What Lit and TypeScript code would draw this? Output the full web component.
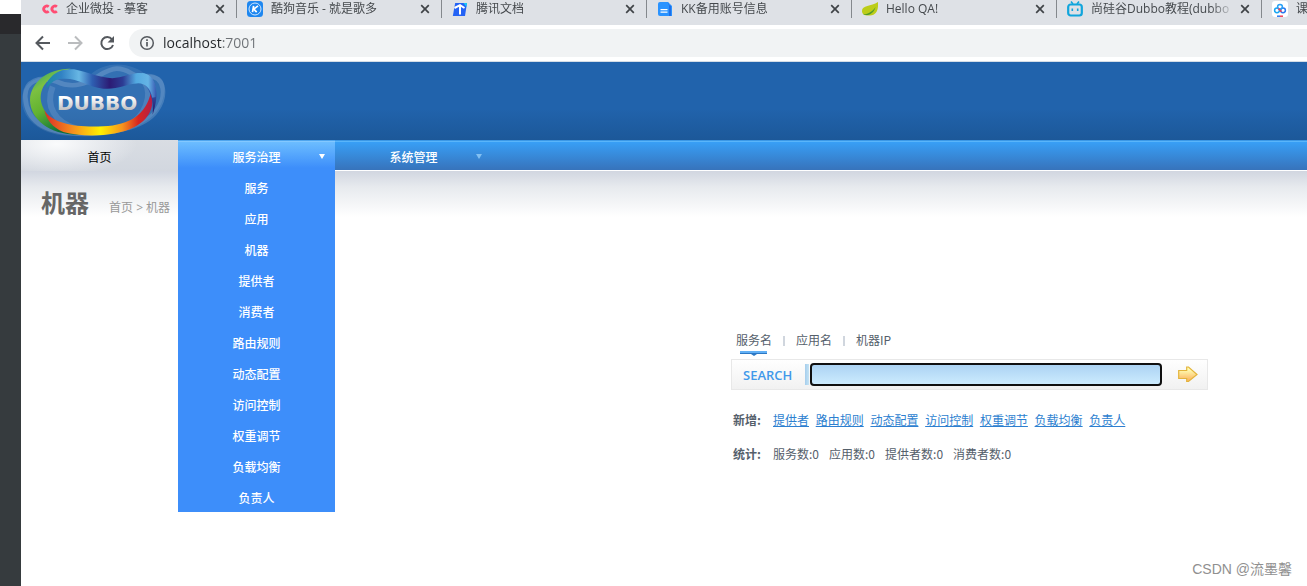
import { LitElement, html, svg, css } from "lit";
import { customElement, state } from "lit/decorators.js";

const tabs = [
  { title: "企业微投 - 摹客", icon: "cc" },
  { title: "酷狗音乐 - 就是歌多", icon: "kugou" },
  { title: "腾讯文档", icon: "tencent" },
  { title: "KK备用账号信息", icon: "doc" },
  { title: "Hello QA!", icon: "leaf" },
  { title: "尚硅谷Dubbo教程(dubbo", icon: "bili" },
  { title: "课", icon: "cloud" },
];

const icons: Record<string, unknown> = {
  cc: svg`<g fill="none" stroke="#ff4d73" stroke-width="2.8">
    <path d="M6.7 5.700A3 3 0 1 0 6.700 10.300"/><path d="M14.900 5.700A3 3 0 1 0 14.900 10.300"/></g>`,
  kugou: svg`<rect width="16" height="16" rx="3.5" fill="#1e87f0"/>
    <circle cx="8" cy="8" r="6" fill="none" stroke="#cfe7ff" stroke-width="1"/>
    <path d="M6.6 4.8 5.5 11.2M11 4.8 6.8 8.2 9.7 11.2" fill="none" stroke="#fff" stroke-width="1.7"/>`,
  tencent: svg`<path d="M3.2 2H15L13 15H.8z" fill="#2463f5"/><path d="M11.5 2H15l-.6 4z" fill="#19c8f5"/>
    <path d="M2.500 7 8 4.200 12.500 7M8 4.500V13.500" fill="none" stroke="#fff" stroke-width="2"/>`,
  doc: svg`<path d="M3 1h8l4 4v10H3a2 2 0 0 1-2-2V3a2 2 0 0 1 2-2z" fill="#2a93ff"/>
    <path d="M11 1v2.500L14 5v10h-2V5z" fill="#1d6fe8"/>
    <path d="M3.500 8.600h7M3.500 11.200h7" stroke="#fff" stroke-width="1.300"/>`,
  leaf: svg`<path d="M16 1c.5 7-1 13-8 13.500C3 15 0 13.500 0 10 0 4 9 5.500 16 1z" fill="#bccd18"/>
    <path d="M1 13.500C7 13 11 10 13.500 6 12 12 7 15.500 1 13.500z" fill="#4f9a2c"/>`,
  bili: svg`<rect x="1.200" y="3.500" width="13.600" height="11" rx="2.500" fill="none" stroke="#10a5dc" stroke-width="2.200"/>
    <path d="M4 .5 6 3M12 .5 10 3" stroke="#10a5dc" stroke-width="1.600"/>
    <path d="M5.300 7.500v2.500M10.700 7.500v2.500" stroke="#10a5dc" stroke-width="1.600"/>`,
  cloud: svg`<rect width="16" height="16" rx="3" fill="#fff"/>
    <g fill="none" stroke-width="1.500"><circle cx="5" cy="9.300" r="2.400" stroke="#18a5f2"/>
    <circle cx="11" cy="9.300" r="2.400" stroke="#2878f0"/><circle cx="8" cy="5.800" r="2.400" stroke="#28a0f5"/>
    <path d="M6.500 7.500 9.500 10.800" stroke="#ef4056"/></g>
    <path d="M5 15.200h3" stroke="#2878f0" stroke-width="1.500"/><path d="M8 15.200h3" stroke="#ef4056" stroke-width="1.500"/>`,
};

@customElement("browser-bar")
class BrowserBar extends LitElement {
  static styles = css`
    :host { display: block; font-family: "Open Sans", "Noto Sans CJK SC", sans-serif; }
    button { border: 0; padding: 0; background: none; font: inherit; color: inherit; display: block; }
    .tabs { display: flex; height: 25px; padding-left: 11px; background: #dee1e6; overflow: hidden; }
    .tab {
      box-sizing: border-box; flex: 0 0 205px; height: 18px; display: flex; align-items: center;
      padding: 0 11px 0 10px; border-right: 1px solid #84888d; font-size: 12px; line-height: 16px; color: #45494d;
    }
    .icon { flex: none; width: 16px; height: 16px; }
    .title {
      flex: 1; margin: 0 5px 0 8px; overflow: hidden; white-space: nowrap; text-align: left;
      -webkit-mask-image: linear-gradient(to left, transparent, #000 24px);
    }
    .close svg { display: block; width: 10px; height: 10px; }
    .tools { display: flex; align-items: center; height: 36px; background: #fff; border-bottom: 1px solid #d5dde6; padding-left: 12px; }
    .nav { width: 20px; height: 20px; margin-right: 12px; }
    .nav svg { display: block; }
    .address {
      flex: 1; display: flex; align-items: center; gap: 6px; height: 28px;
      padding-left: 8px; background: #f1f3f4; border-radius: 14px 0 0 14px;
    }
    .url {
      flex: 1; min-width: 0; border: 0; padding: 0; outline: 0; height: 22px;
      font: 14px/22px "Open Sans", "Noto Sans CJK SC", sans-serif; color: transparent;
      background: linear-gradient(to right, #24272a 59px, #6e7276 59px);
      -webkit-background-clip: text; background-clip: text;
    }
  `;
  render() {
    return html`
      <div class="tabs">
        ${tabs.map(
          (t) => html`<div class="tab">
            <svg class="icon" viewBox="0 0 16 16">${icons[t.icon]}</svg>
            <button class="title">${t.title}</button>
            <button class="close" aria-label="关闭">
              <svg viewBox="0 0 10 10"><path d="M1.200 1.200 8.800 8.800M8.800 1.200 1.200 8.800" stroke="#3f4347" stroke-width="1.700" /></svg>
            </button>
          </div>`
        )}
      </div>
      <div class="tools">
        <button class="nav" aria-label="后退">
          <svg width="20" height="20" fill="none" stroke="#55595e" stroke-width="2"><path d="M17 10H4M10 3.500 3.500 10l6.500 6.500" /></svg>
        </button>
        <button class="nav" aria-label="前进">
          <svg width="20" height="20" fill="none" stroke="#babcbe" stroke-width="2"><path d="M3 10h13M10 3.500l6.500 6.500-6.500 6.500" /></svg>
        </button>
        <button class="nav" aria-label="刷新">
          <svg width="20" height="20"><path d="M15 6.300A6 6 0 1 0 16 12" fill="none" stroke="#55595e" stroke-width="2" /><path d="M17 3v6.500h-6.500z" fill="#55595e" /></svg>
        </button>
        <div class="address">
          <svg width="20" height="20"><circle cx="10" cy="10" r="6.300" fill="none" stroke="#55595e" stroke-width="1.500" /><path d="M10 9v4.500M10 6.300v1.700" stroke="#55595e" stroke-width="1.700" /></svg>
          <input class="url" aria-label="地址" value="localhost:7001" />
        </div>
      </div>
    `;
  }
}

@customElement("dubbo-logo")
class DubboLogo extends LitElement {
  static styles = css`
    :host { display: block; }
    .logo { display: block; }
    .word { font: 700 60px "DejaVu Sans", sans-serif; }
  `;
  render() {
    return html`<svg class="logo" width="146" height="75" viewBox="63 24 438 225" role="img" aria-label="DUBBO">
      <defs>
        <linearGradient id="green" x1="0" y1="0" x2=".5" y2="1">
          <stop offset="0" stop-color="#1d9a7a" /><stop offset=".3" stop-color="#7cc142" />
          <stop offset=".6" stop-color="#62b22f" /><stop offset="1" stop-color="#08703c" />
        </linearGradient>
        <linearGradient id="fire">
          <stop offset="0" stop-color="#d92b27" /><stop offset=".25" stop-color="#f68a1f" />
          <stop offset=".52" stop-color="#fff100" /><stop offset=".72" stop-color="#f7941d" />
          <stop offset=".87" stop-color="#d9261f" /><stop offset="1" stop-color="#b01f4a" />
        </linearGradient>
        <linearGradient id="sky">
          <stop offset="0" stop-color="#1c8ba0" /><stop offset=".14" stop-color="#3182c4" />
          <stop offset=".3" stop-color="#68b7e4" /><stop offset=".42" stop-color="#2e5fb2" />
          <stop offset=".58" stop-color="#2c1b74" /><stop offset=".7" stop-color="#2c3c94" />
          <stop offset=".82" stop-color="#53a9e0" /><stop offset=".93" stop-color="#65b4e5" />
          <stop offset="1" stop-color="#3b5eb5" />
        </linearGradient>
        <linearGradient id="violet" x1="0" y1="0" x2="0" y2="1">
          <stop offset="0" stop-color="#64b4e5" /><stop offset=".45" stop-color="#3159ad" />
          <stop offset="1" stop-color="#261262" />
        </linearGradient>
        <linearGradient id="silver" x1="0" y1="0" x2="0" y2="1">
          <stop offset=".25" stop-color="#fff" /><stop offset=".8" stop-color="#bdbdbf" />
        </linearGradient>
      </defs>
      <g fill="none" stroke="#d5e7f5">
        <path d="M150 64C90 60 66 95 66 135C68 195 130 240 215 240C340 248 455 215 485 140C506 82 488 50 440 58C400 20 320 10 270 57C230 35 180 48 150 64Z" stroke="none" fill="#d5e7f5" fill-opacity=".1" />
        <path d="M76 125C72 75 120 57 170 77C255 116 300 38 350 38C395 38 395 69 440 60C500 58 498 125 470 163C435 215 330 236 230 232C130 230 80 192 76 125Z" stroke-width="14" stroke-opacity=".2" />
        <path d="M158 92C135 150 165 200 230 218M432 75C460 115 438 185 375 214" stroke-width="18" stroke-opacity=".15" />
      </g>
      <path d="M212 38C146 36 91 78 90 132C90 190 150 238 238 236C190 222 154 202 137 168C112 132 120 92 152 67C172 52 195 47 212 38Z" fill="url(#green)" />
      <path d="M133 163C158 204 230 215 310 211C390 207 438 176 453 108C466 150 449 190 402 214C345 243 248 244 190 228C158 216 139 190 133 163Z" fill="url(#fire)" />
      <path d="M425 51C469 57 481 112 458 176C462 130 450 94 420 76Z" fill="url(#violet)" />
      <path d="M145 73C165 45 190 38 222 40C272 50 316 74 358 64C392 56 410 47 437 53C461 62 470 84 467 123L457 125C451 96 435 82 415 82C380 84 350 102 310 98C262 92 235 66 190 68C165 69 155 78 138 97Z" fill="url(#sky)" />
      <text class="word" x="171" y="163" fill="url(#silver)">DUBBO</text>
    </svg>`;
  }
}

@customElement("app-root")
class AppRoot extends LitElement {
  @state() private scope = 0;

  private services = ["服务", "应用", "机器", "提供者", "消费者", "路由规则", "动态配置", "访问控制", "权重调节", "负载均衡", "负责人"];
  private scopes = ["服务名", "应用名", "机器IP"];
  private additions = ["提供者", "路由规则", "动态配置", "访问控制", "权重调节", "负载均衡", "负责人"];
  private totals = ["服务数", "应用数", "提供者数", "消费者数"];

  static styles = css`
    :host {
      display: flex; min-height: 100vh; position: relative; background: #fff; overflow: hidden;
      font: 12px/18px "Noto Sans CJK SC", sans-serif; color: #55606b;
    }
    button { border: 0; padding: 0; background: none; font: inherit; color: inherit; }
    a { color: inherit; text-decoration: none; }
    .rail { flex: none; width: 21px; background: linear-gradient(#fff 14px, #29292c 14px, #29292c 34px, #363b3e 34px); }
    .window { flex: 1; min-width: 0; }
    .banner { height: 78px; background: linear-gradient(#2163ac 60%, #1c5899); box-sizing: border-box; padding-top: 2px; }
    .menu {
      display: flex; height: 31px; box-sizing: border-box; border-bottom: 1px solid #fff;
      background: linear-gradient(#3b98e6 1px, #59b5fa 1px, #59b5fa 2px, #389ff6 2px, #3773bb);
    }
    .entry { position: relative; width: 157px; height: 31px; line-height: 34px; text-align: center; color: #fff; font-weight: 500; }
    .entry > a { display: block; height: 31px; }
    .home { color: #000; font-weight: 400; background: radial-gradient(ellipse 80px 32px at 36px 4px, #fafbfc, transparent), linear-gradient(#d9dde3, #d2d7df); }
    .open { background: linear-gradient(#4fa5ee 1px, #83c8ff 1px, #83c8ff 2px, #6cbdff 2px, #3d8efa 28px); }
    .arrow { position: absolute; right: 10px; top: 14px; border: 3px solid transparent; border-top: 5px solid #fff; border-bottom: 0; }
    .faded { border-top-color: #82c0f2; }
    .dropdown { position: absolute; z-index: 2; top: 31px; left: 0; right: 0; margin: 0; padding: 0; list-style: none; background: #3d8efa; }
    .dropdown a { display: block; height: 31px; line-height: 34px; }
    .heading {
      display: flex; align-items: baseline; gap: 20px; height: 48px; padding: 14px 20px 0;
      background: linear-gradient(#d1d6e0, #e7eaee 16px, #fff 46px);
    }
    .name { margin: 0; font-size: 24px; line-height: 34px; font-weight: 700; color: #666; }
    .crumbs { color: #999; font-family: "Open Sans", "Noto Sans CJK SC", sans-serif; }
    .finder { width: 477px; margin: 97px 99px 0 auto; }
    .scopes { display: flex; height: 29px; padding-left: 5px; }
    .scope { position: relative; height: 20px; line-height: 20px; margin-right: 12px; }
    .scope + .scope { padding-left: 12px; }
    .scope + .scope::before { content: ""; position: absolute; left: -1px; top: 6px; width: 2px; height: 10px; background: #d0d6de; }
    .chosen::after {
      content: ""; position: absolute; left: 4px; top: 21px; width: 27px; height: 3px;
      background: linear-gradient(#62b0f5 50%, #2c78c4 50%);
    }
    .chosen i { position: absolute; left: 15px; top: 24px; border: 3px solid transparent; border-top: 2px solid #2c78c4; border-bottom: 0; }
    .search {
      display: flex; align-items: center; box-sizing: border-box; height: 31px; padding-left: 11px;
      border: 1px solid #e8e8e8; background: linear-gradient(#fff, #f1f1f1);
    }
    .label { width: 62px; font: 600 13px/20px "Open Sans", sans-serif; color: #4299ea; }
    .field { flex: 1; display: flex; padding-left: 5px; background: linear-gradient(to right, #a5cdec, #c5e4f5 4px, transparent 4px) 0 1px / 100% 21px no-repeat; }
    .query {
      flex: 1; min-width: 0; box-sizing: border-box; height: 23px; padding: 0 4px; outline: 0;
      border: 2px solid #101010; border-radius: 4px; background: linear-gradient(#acd3f3, #ccebfe);
      font: inherit;
    }
    .go { width: 45px; height: 24px; display: flex; justify-content: center; align-items: center; padding-left: 7px; }
    .row { display: flex; margin-top: 16px; padding-left: 2px; }
    .first { margin-top: 21px; }
    .row b { width: 40px; font-weight: 700; }
    .links a { color: #2d7fd0; text-decoration: underline; margin-right: 4px; }
    .stats { display: flex; gap: 10px; }
    .credit { position: absolute; right: 15px; bottom: 6px; font: 14px/22px "Liberation Sans", "Noto Sans CJK SC", sans-serif; color: #909090; }
  `;

  render() {
    return html`
      <div class="rail"></div>
      <div class="window">
        <browser-bar></browser-bar>
        <header class="banner"><dubbo-logo></dubbo-logo></header>
        <nav class="menu">
          <div class="entry home"><a href="#">首页</a></div>
          <div class="entry open">
            <a href="#">服务治理</a><span class="arrow"></span>
            <ul class="dropdown">${this.services.map((s) => html`<li><a href="#">${s}</a></li>`)}</ul>
          </div>
          <div class="entry"><a href="#">系统管理</a><span class="arrow faded"></span></div>
        </nav>
        <main>
          <div class="heading">
            <h1 class="name">机器</h1>
            <div class="crumbs"><a href="#">首页</a> &gt; 机器</div>
          </div>
          <section class="finder">
            <div class="scopes">
              ${this.scopes.map(
                (s, i) => html`<button class="scope ${i === this.scope ? "chosen" : ""}" @click=${() => (this.scope = i)}>${s}${i === this.scope ? html`<i></i>` : ""}</button>`
              )}
            </div>
            <form class="search" @submit=${(e: Event) => e.preventDefault()}>
              <label class="label" for="query">SEARCH</label>
              <div class="field"><input class="query" id="query" type="text" /></div>
              <button class="go" aria-label="搜索">
                <svg width="20" height="17" viewBox="0 0 20 17">
                  <defs><linearGradient id="gold" x1="0" y1="0" x2="0" y2="1"><stop offset=".2" stop-color="#fffbb0" /><stop offset=".9" stop-color="#fbb763" /></linearGradient></defs>
                  <path d="M.7 4.500h8V1L10.500 1 19 8.500 10.500 15.500H8.700V12.500H.7Z" fill="url(#gold)" stroke="#e3b43c" stroke-width="1.200" />
                </svg>
              </button>
            </form>
            <div class="row first">
              <b>新增:</b>
              <div class="links">${this.additions.map((a) => html`<a href="#">${a}</a> `)}</div>
            </div>
            <div class="row">
              <b>统计:</b>
              <div class="stats">${this.totals.map((t) => html`<span>${t}:0</span>`)}</div>
            </div>
          </section>
        </main>
      </div>
      <div class="credit">CSDN @流墨馨</div>
    `;
  }
}
